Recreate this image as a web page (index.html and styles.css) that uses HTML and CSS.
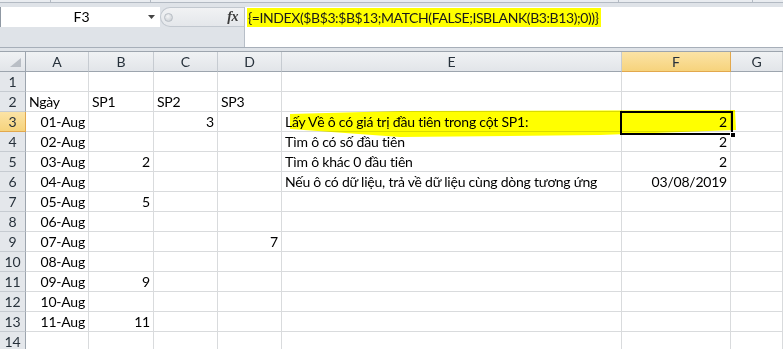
FILE: index.html
```html
<!DOCTYPE html>
<html lang="vi">
<head>
<meta charset="utf-8">
<title>Excel</title>
<link rel="stylesheet" href="styles.css">
</head>
<body>
<div class="top-edge">
  <div class="seg s1"></div><div class="seg s2"></div><div class="seg s3"></div><div class="seg s4"></div>
</div>
<div class="fbar">
  <div class="left-panel">
    <div class="nb-row">
      <div class="namebox">
        <span class="nb-text">F3</span>
        <svg class="nb-arrow" width="8" height="5" viewBox="0 0 8 5"><polygon points="0,0 7,0 3.5,4" fill="#444"/></svg>
      </div>
      <div class="fx-zone">
        <span class="grip"></span>
        <span class="fx">fx</span>
      </div>
    </div>
  </div>
  <div class="formula">
    <span class="ftext">{=INDEX($B$3:$B$13;MATCH(FALSE;ISBLANK(B3:B13);0))}</span>
  </div>
</div>
<div class="gap"></div>
<div class="sheet">
  <div class="grid">
    <div class="h corner"><svg class="tri" width="12" height="10" viewBox="0 0 12 10"><polygon points="11,0 11,9 0,9" fill="#b9bec5"/></svg></div>
    <div class="h">A</div><div class="h">B</div><div class="h">C</div><div class="h">D</div><div class="h">E</div><div class="h hsel">F</div><div class="h">G</div>

    <div class="rh">1</div><div class="c"></div><div class="c"></div><div class="c"></div><div class="c"></div><div class="c"></div><div class="c"></div><div class="c"></div>
    <div class="rh">2</div><div class="c">Ngày</div><div class="c">SP1</div><div class="c">SP2</div><div class="c">SP3</div><div class="c"></div><div class="c"></div><div class="c"></div>
    <div class="rh rsel">3</div><div class="c r">01-Aug</div><div class="c"></div><div class="c r">3</div><div class="c"></div><div class="c">Lấy Về ô có giá trị đầu tiên trong cột SP1:</div><div class="c r">2</div><div class="c"></div>
    <div class="rh">4</div><div class="c r">02-Aug</div><div class="c"></div><div class="c"></div><div class="c"></div><div class="c">Tìm ô có số đầu tiên</div><div class="c r">2</div><div class="c"></div>
    <div class="rh">5</div><div class="c r">03-Aug</div><div class="c r">2</div><div class="c"></div><div class="c"></div><div class="c">Tìm ô khác 0 đầu tiên</div><div class="c r">2</div><div class="c"></div>
    <div class="rh">6</div><div class="c r">04-Aug</div><div class="c"></div><div class="c"></div><div class="c"></div><div class="c">Nếu ô có dữ liệu, trả về dữ liệu cùng dòng tương ứng</div><div class="c r">03/08/2019</div><div class="c"></div>
    <div class="rh">7</div><div class="c r">05-Aug</div><div class="c r">5</div><div class="c"></div><div class="c"></div><div class="c"></div><div class="c"></div><div class="c"></div>
    <div class="rh">8</div><div class="c r">06-Aug</div><div class="c"></div><div class="c"></div><div class="c"></div><div class="c"></div><div class="c"></div><div class="c"></div>
    <div class="rh">9</div><div class="c r">07-Aug</div><div class="c"></div><div class="c"></div><div class="c r">7</div><div class="c"></div><div class="c"></div><div class="c"></div>
    <div class="rh">10</div><div class="c r">08-Aug</div><div class="c"></div><div class="c"></div><div class="c"></div><div class="c"></div><div class="c"></div><div class="c"></div>
    <div class="rh">11</div><div class="c r">09-Aug</div><div class="c r">9</div><div class="c"></div><div class="c"></div><div class="c"></div><div class="c"></div><div class="c"></div>
    <div class="rh">12</div><div class="c r">10-Aug</div><div class="c"></div><div class="c"></div><div class="c"></div><div class="c"></div><div class="c"></div><div class="c"></div>
    <div class="rh">13</div><div class="c r">11-Aug</div><div class="c r">11</div><div class="c"></div><div class="c"></div><div class="c"></div><div class="c"></div><div class="c"></div>
    <div class="rh">14</div><div class="c"></div><div class="c"></div><div class="c"></div><div class="c"></div><div class="c"></div><div class="c"></div><div class="c"></div>
  </div>
  <div class="marker"></div>
  <div class="selection"><span class="handle"></span></div>
</div>
</body>
</html>
```
FILE: styles.css
```css
* { box-sizing: border-box; }
html, body { margin: 0; padding: 0; }
body {
  width: 783px;
  height: 349px;
  overflow: hidden;
  background: #fff;
  font-family: Lato, "Open Sans", sans-serif;
  font-size: 14px;
  color: #000;
}

/* ribbon edge */
.top-edge {
  height: 7px;
  display: flex;
  background: linear-gradient(to bottom, #e9ecf0 0, #e9ecf0 2px, #b3bac3 2px, #b3bac3 3px, #dfe3e8 3px);
}
.seg { height: 2px; border-right: 1px solid #b3bac3; }
.s1 { width: 51px; }
.s2 { width: 100px; }
.s3 { width: 468px; }
.s4 { width: 134px; }

/* formula bar */
.fbar {
  display: flex;
  height: 41px;
  background: #dfe3e8;
  border-bottom: 1px solid #a7afb9;
}
.left-panel { width: 244px; flex: none; }
.nb-row { display: flex; height: 20px; }
.namebox {
  width: 160px;
  flex: none;
  background: #fff;
  border-left: 1px solid #8f98a3;
  position: relative;
  display: flex;
  align-items: center;
  justify-content: center;
  line-height: 20px;
}
.nb-text { padding-left: 2px; }
.nb-arrow { position: absolute; left: 147px; top: 8px; }
.fx-zone {
  flex: 1;
  display: flex;
  align-items: center;
  justify-content: space-between;
  background: linear-gradient(to bottom, #f1f2f4, #e4e7eb);
  border: 1px solid #c2c8cf;
  border-right: none;
  border-radius: 10px 0 0 10px;
  padding: 0 6px 0 3px;
}
.grip {
  width: 9px;
  height: 9px;
  border-radius: 50%;
  background: radial-gradient(circle at 40% 35%, #f4f5f6, #c3c8ce);
  border: 1px solid #b8bec5;
}
.fx {
  font-family: "Liberation Serif", "DejaVu Serif", serif;
  font-style: italic;
  font-weight: bold;
  font-size: 14px;
  color: #3c3c3c;
  letter-spacing: -0.5px;
  margin-top: -1px;
}
.formula {
  flex: 1;
  background: #fff;
  border-left: 1px solid #b7bec7;
  padding: 1px 0 0 2px;
}
.ftext {
  display: inline-block;
  line-height: 19px;
  background: #ffff00;
  color: #1a1a1a;
  padding: 0 2px 0 1px;
  letter-spacing: -0.4px;
}
.gap { height: 3px; background: #dfe3e8; }

/* sheet */
.sheet {
  position: relative;
  border-top: 1px solid #9da5ae;
}
.grid {
  display: grid;
  grid-template-columns: 26px 63px 65px 64px 64px 340px 109px 1fr;
  grid-auto-rows: 20px;
}
.h {
  background: linear-gradient(to bottom, #f0f2f4, #e2e5e9);
  border-right: 1px solid #c6cbd1;
  border-bottom: 1px solid #9da5ae;
  text-align: center;
  line-height: 19px;
  color: #27313b;
}
.corner { position: relative; border-right-color: #9da5ae; }
.tri { position: absolute; right: 3px; bottom: 3px; }
.hsel {
  background: linear-gradient(to bottom, #fbe3a6, #f6d37c);
  border-right-color: #e2a84d;
  border-bottom-color: #e2a84d;
}
.rh {
  background: #e4e7eb;
  border-right: 1px solid #9da5ae;
  border-bottom: 1px solid #c6cbd1;
  text-align: center;
  line-height: 19px;
  color: #27313b;
}
.rsel {
  background: linear-gradient(to bottom, #fbe3a6, #f6d37c);
  border-bottom-color: #e2a84d;
  border-right-color: #e2a84d;
}
.c {
  border-right: 1px solid #d9dbdd;
  border-bottom: 1px solid #d9dbdd;
  line-height: 19px;
  padding: 0 3px;
  white-space: nowrap;
  overflow: visible;
  letter-spacing: -0.22px;
}
.r { text-align: right; }

/* highlighter stroke over E3:F3 */
.marker {
  position: absolute;
  left: 286px;
  top: 57px;
  width: 452px;
  height: 29px;
  background: #ffff00;
  mix-blend-mode: multiply;
  clip-path: polygon(4px 5px, 114px 2px, 449px 1px, 450px 21px, 314px 26px, 114px 28px, 4px 20px);
}

/* active cell selection */
.selection {
  position: absolute;
  left: 620px;
  top: 59px;
  width: 113px;
  height: 24px;
  border: 2px solid #000;
}
.handle {
  position: absolute;
  right: -5px;
  bottom: -5px;
  width: 6px;
  height: 6px;
  background: #000;
  border: 1px solid #fff;
}
```
